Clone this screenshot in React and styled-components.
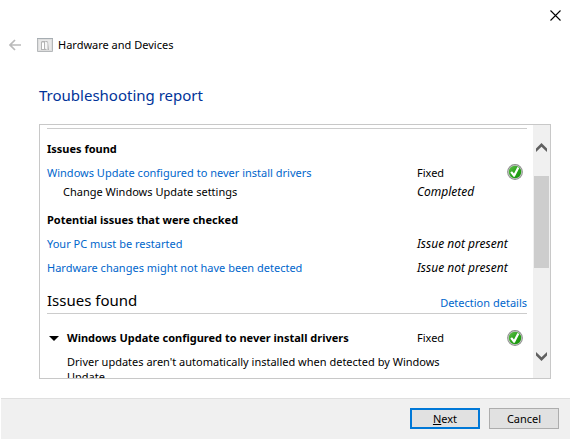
import React from "react";
import styled, { createGlobalStyle } from "styled-components";

const GlobalStyle = createGlobalStyle`
  * { box-sizing: border-box; }
  body {
    margin: 0;
    background: #fff;
    color: #000;
    font-family: "Noto Sans", "Open Sans", sans-serif;
    font-size: 11px;
    line-height: 16px;
  }
  button, a { font: inherit; color: inherit; }
`;

const Window = styled.div`
  display: flex;
  flex-direction: column;
  height: 100vh;
  padding: 0 1px 1px;
`;

const TitleBar = styled.header`
  display: flex;
  justify-content: flex-end;
  padding: 6px 6px 0;
`;

const IconButton = styled.button`
  display: flex;
  align-items: center;
  justify-content: center;
  width: ${(p) => p.$width}px;
  height: ${(p) => p.$height}px;
  padding: 0;
  border: 0;
  background: transparent;
`;

const NavBar = styled.nav`
  display: flex;
  align-items: center;
  height: 22px;
  margin-top: 10px;
  padding-left: 7px;
`;

const AppTitle = styled.span`
  display: flex;
  align-items: center;
  gap: 5px;
  margin-left: 15px;
`;

const Main = styled.main`
  display: flex;
  flex: 1;
  flex-direction: column;
  min-height: 0;
  padding: 27px 19px 19px 38px;
`;

const PageTitle = styled.h1`
  margin: 0 0 17px;
  color: #003399;
  font-size: 15px;
  font-weight: 400;
  line-height: 24px;
`;

const Panel = styled.section`
  display: flex;
  flex: 1;
  min-height: 0;
  border: 1px solid #c8c8c8;
`;

const Report = styled.div`
  flex: 1;
  min-width: 0;
  overflow: hidden;
  padding: 3px 6px 0 7px;
`;

const Rule = styled.hr`
  height: 1px;
  margin: 0 0 9px;
  border: 0;
  background: #ccc;
`;

const Table = styled.table`
  width: 100%;
  border-collapse: collapse;
  table-layout: fixed;
`;

const Col = styled.col`
  width: ${(p) => p.$width}px;
`;

const GroupHeading = styled.th`
  height: ${(p) => (p.$spaced ? 32 : 22)}px;
  padding: ${(p) => (p.$spaced ? 10 : 0)}px 0 0;
  font-weight: 700;
  line-height: 16px;
  text-align: left;
`;

const Cell = styled.td`
  height: ${(p) => (p.$compact ? 15 : 24)}px;
  padding: 0 0 0 ${(p) => (p.$indent ? 16 : 0)}px;
  font-size: ${(p) => (p.$italic ? 12 : 11)}px;
  font-style: ${(p) => (p.$italic ? "italic" : "normal")};
  line-height: 15px;
  white-space: nowrap;
`;

const Link = styled.a`
  color: #0066cc;
  text-decoration: none;
`;

const SectionHead = styled.div`
  display: flex;
  align-items: flex-end;
  justify-content: space-between;
  height: 35px;
  padding-bottom: 2px;
  border-bottom: 1px solid #ccc;
`;

const SectionTitle = styled.h2`
  margin: 0;
  font-size: 15px;
  font-weight: 400;
  line-height: 22px;
`;

const DetailRow = styled.div`
  display: grid;
  grid-template-columns: 20px 1fr 90px 20px;
  align-items: center;
  height: 24px;
  margin-top: 12px;
`;

const DetailTitle = styled.h3`
  margin: 0;
  font-size: 11px;
  font-weight: 700;
  white-space: nowrap;
`;

const Description = styled.p`
  margin: 4px 70px 0 20px;
  line-height: 15px;
`;

const StatusIcon = styled.svg`
  display: block;
  width: 16px;
  height: 16px;
`;

const Scrollbar = styled.div`
  display: flex;
  flex-direction: column;
  width: 17px;
  padding: 13px 0;
  background: #f0f0f0;
`;

const Track = styled.div`
  display: grid;
  flex: 1;
  grid-template-rows: 20fr 92fr 79fr;
  padding: 0 1px;
`;

const Thumb = styled.div`
  grid-row: 2;
  background: #cdcdcd;
`;

const Footer = styled.footer`
  display: flex;
  gap: 9px;
  justify-content: flex-end;
  height: 41px;
  padding: 9px 11px;
  border-top: 1px solid #dfdfdf;
  background: #f0f0f0;
`;

const Button = styled.button`
  width: 70px;
  height: 21px;
  padding: 0;
  border: ${(p) => (p.$primary ? "2px solid #0078d7" : "1px solid #adadad")};
  background: #e1e1e1;
  line-height: 16px;
`;

const Success = () => (
  <StatusIcon viewBox="0 0 16 16" role="img" aria-label="Fixed">
    <defs>
      <linearGradient id="green" x1="0" y1="0" x2="1" y2="1">
        <stop offset="0" stopColor="#64bd4e" />
        <stop offset="0.5" stopColor="#2aa51b" />
        <stop offset="1" stopColor="#159008" />
      </linearGradient>
    </defs>
    <circle cx="8" cy="8" r="7.9" fill="#8b8d8b" />
    <circle cx="8" cy="8" r="7" fill="#c4c8c4" />
    <circle cx="8" cy="8" r="6.2" fill="url(#green)" />
    <path d="M3.3 8.5 5 7.2 7 9.4 10.4 3 12.3 3.9 7.8 12.7H6.5Z" fill="#fff" />
  </StatusIcon>
);

const ScrollArrow = ({ up }) => (
  <svg width="11" height="9" viewBox="0 0 11 9" aria-hidden="true">
    <path
      d={up ? "M0 5.5 5.5 0 11 5.5V9L5.5 3.8 0 9Z" : "M0 3.5 5.5 9 11 3.5V0L5.5 5.2 0 0Z"}
      fill="#606060"
    />
  </svg>
);

const issues = [
  { name: "Windows Update configured to never install drivers", status: "Fixed", fixed: true },
  { name: "Change Windows Update settings", status: "Completed", step: true },
];

const checks = [
  { name: "Your PC must be restarted", status: "Issue not present" },
  { name: "Hardware changes might not have been detected", status: "Issue not present" },
];

const ReportRow = ({ name, status, fixed, step }) => (
  <tr>
    <Cell $compact={step} $indent={step}>
      {step ? name : <Link href="#details">{name}</Link>}
    </Cell>
    <Cell $compact={step} $italic={!fixed}>{status}</Cell>
    <Cell $compact={step}>{fixed && <Success />}</Cell>
  </tr>
);

export default function App() {
  return (
    <Window>
      <GlobalStyle />
      <TitleBar>
        <IconButton $width={18} $height={18} aria-label="Close">
          <svg width="11" height="11" viewBox="0 0 11 11" aria-hidden="true">
            <path d="M.5.5 10.5 10.5M10.5.5.5 10.5" stroke="#000" strokeWidth="1.1" />
          </svg>
        </IconButton>
      </TitleBar>
      <NavBar>
        <IconButton $width={14} $height={18} aria-label="Back">
          <svg width="12" height="12" viewBox="0 0 12 12" fill="none" aria-hidden="true">
            <path d="M6 1 1 6 6 11M1 6H12" stroke="#bababa" strokeWidth="1.7" />
          </svg>
        </IconButton>
        <AppTitle>
          <svg width="16" height="14" viewBox="0 0 16 14" aria-hidden="true">
            <path d="M.5.5H15.5V13.5H.5Z" fill="#dedede" stroke="#b5b8ba" />
            <path d="M0 0H16V1H0Z" fill="#a6adb2" />
            <path d="M2 2H14V12H2Z" fill="#e9e9e9" />
            <path d="M4 12V4L5 3H10L11 4 12 12Z" fill="#b4b4b4" />
            <path d="M5 4.5H7V11H5Z" fill="#fff" />
            <path d="M8 3.5 10.5 4.5V12L8 10.5Z" fill="#f6f6f6" />
          </svg>
          Hardware and Devices
        </AppTitle>
      </NavBar>
      <Main>
        <PageTitle>Troubleshooting report</PageTitle>
        <Panel>
          <Report>
            <Rule />
            <Table>
              <colgroup>
                <col />
                <Col $width={90} />
                <Col $width={20} />
              </colgroup>
              <tbody>
                <tr><GroupHeading colSpan={3}>Issues found</GroupHeading></tr>
                {issues.map((item) => <ReportRow key={item.name} {...item} />)}
              </tbody>
              <tbody>
                <tr><GroupHeading colSpan={3} $spaced>Potential issues that were checked</GroupHeading></tr>
                {checks.map((item) => <ReportRow key={item.name} {...item} />)}
              </tbody>
            </Table>
            <SectionHead>
              <SectionTitle>Issues found</SectionTitle>
              <Link href="#detection">Detection details</Link>
            </SectionHead>
            <DetailRow id="details">
              <IconButton $width={14} $height={14} aria-label="Collapse">
                <svg width="10" height="5" viewBox="0 0 10 5" aria-hidden="true">
                  <path d="M0 0H10L5 5Z" />
                </svg>
              </IconButton>
              <DetailTitle>Windows Update configured to never install drivers</DetailTitle>
              <span>Fixed</span>
              <Success />
            </DetailRow>
            <Description>
              Driver updates aren't automatically installed when detected by Windows Update.
            </Description>
          </Report>
          <Scrollbar>
            <IconButton $width={17} $height={18} aria-label="Scroll up"><ScrollArrow up /></IconButton>
            <Track><Thumb /></Track>
            <IconButton $width={17} $height={18} aria-label="Scroll down"><ScrollArrow /></IconButton>
          </Scrollbar>
        </Panel>
      </Main>
      <Footer>
        <Button $primary><u>N</u>ext</Button>
        <Button>Cancel</Button>
      </Footer>
    </Window>
  );
}
